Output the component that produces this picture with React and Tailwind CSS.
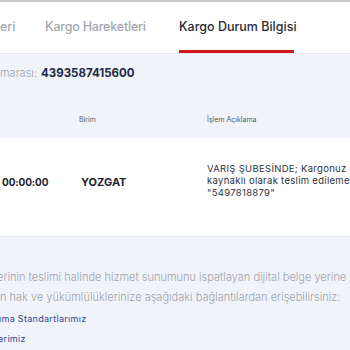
export default function App() {
  const font = { fontFamily: "Inter, 'Noto Sans', sans-serif" };
  return (
    <div className="w-[350px] h-[350px] overflow-hidden bg-[#f0f3fa] relative" style={font}>
      <div className="h-[2px] bg-[#c9c9c9]" />
      <div className="h-[52px] bg-white border-b border-[#e6e8ee] flex items-stretch text-[12.5px] font-medium whitespace-nowrap">
        <div className="flex items-center w-[45px] shrink-0 text-[#a3a7b0]">eri</div>
        <div className="flex items-center w-[134px] shrink-0 text-[#a3a7b0] tracking-[-0.2px]">Kargo Hareketleri</div>
        <div className="relative flex items-center w-[115px] shrink-0 text-[#272b36]">
          Kargo Durum Bilgisi
          <div className="absolute left-0 right-0 bottom-0 h-[3px] bg-[#d7141d]" />
        </div>
      </div>
      <div className="h-[38px] flex items-center whitespace-nowrap pt-[1px]">
        <span className="text-[11px] text-[#a0a4ad] font-light">marası:</span>
        <span className="ml-[4px] font-bold text-[#1e2a44] text-[11.5px]">4393587415600</span>
      </div>
      <div className="h-[46px] flex items-center pt-[10px] text-[7px] text-[#555a66] whitespace-nowrap">
        <div className="w-[79px] shrink-0" />
        <div className="w-[128px] shrink-0">Birim</div>
        <div className="shrink-0">İşlem Açıklama</div>
      </div>
      <div className="h-[99px] pb-[10px] bg-white border-b border-[#e4e6ec] flex items-center whitespace-nowrap">
        <div className="w-[81px] shrink-0 pl-[2px] text-[10px] tracking-[-0.1px] font-bold text-[#1f2430]">00:00:00</div>
        <div className="w-[126px] shrink-0 text-[11px] font-bold text-[#1f2430]">YOZGAT</div>
        <div className="shrink-0 text-[9.5px] tracking-[0.3px] leading-[12px] text-[#2f3340] -mt-[2px]">
          <div>VARIŞ ŞUBESİNDE; Kargonuz adres</div>
          <div>kaynaklı olarak teslim edilemedi</div>
          <div>"5497818879"</div>
        </div>
      </div>
      <div className="pt-[30px] text-[11px] leading-[20px] text-[#a0a3ab] whitespace-nowrap font-light">
        <div className="-ml-[3px]">erinin teslimi halinde hizmet sunumunu ispatlayan dijital belge yerine</div>
        <div>n hak ve yükümlülüklerinize aşağıdaki bağlantılardan erişebilirsiniz:</div>
      </div>
      <div className="pt-[2px] text-[9px] tracking-[0.3px] leading-[20px] text-[#2c4a8a] whitespace-nowrap">
        <div className="-ml-[1px]">ıma Standartlarımız</div>
        <div className="-ml-[2px]">erimiz</div>
      </div>
    </div>
  );
}
